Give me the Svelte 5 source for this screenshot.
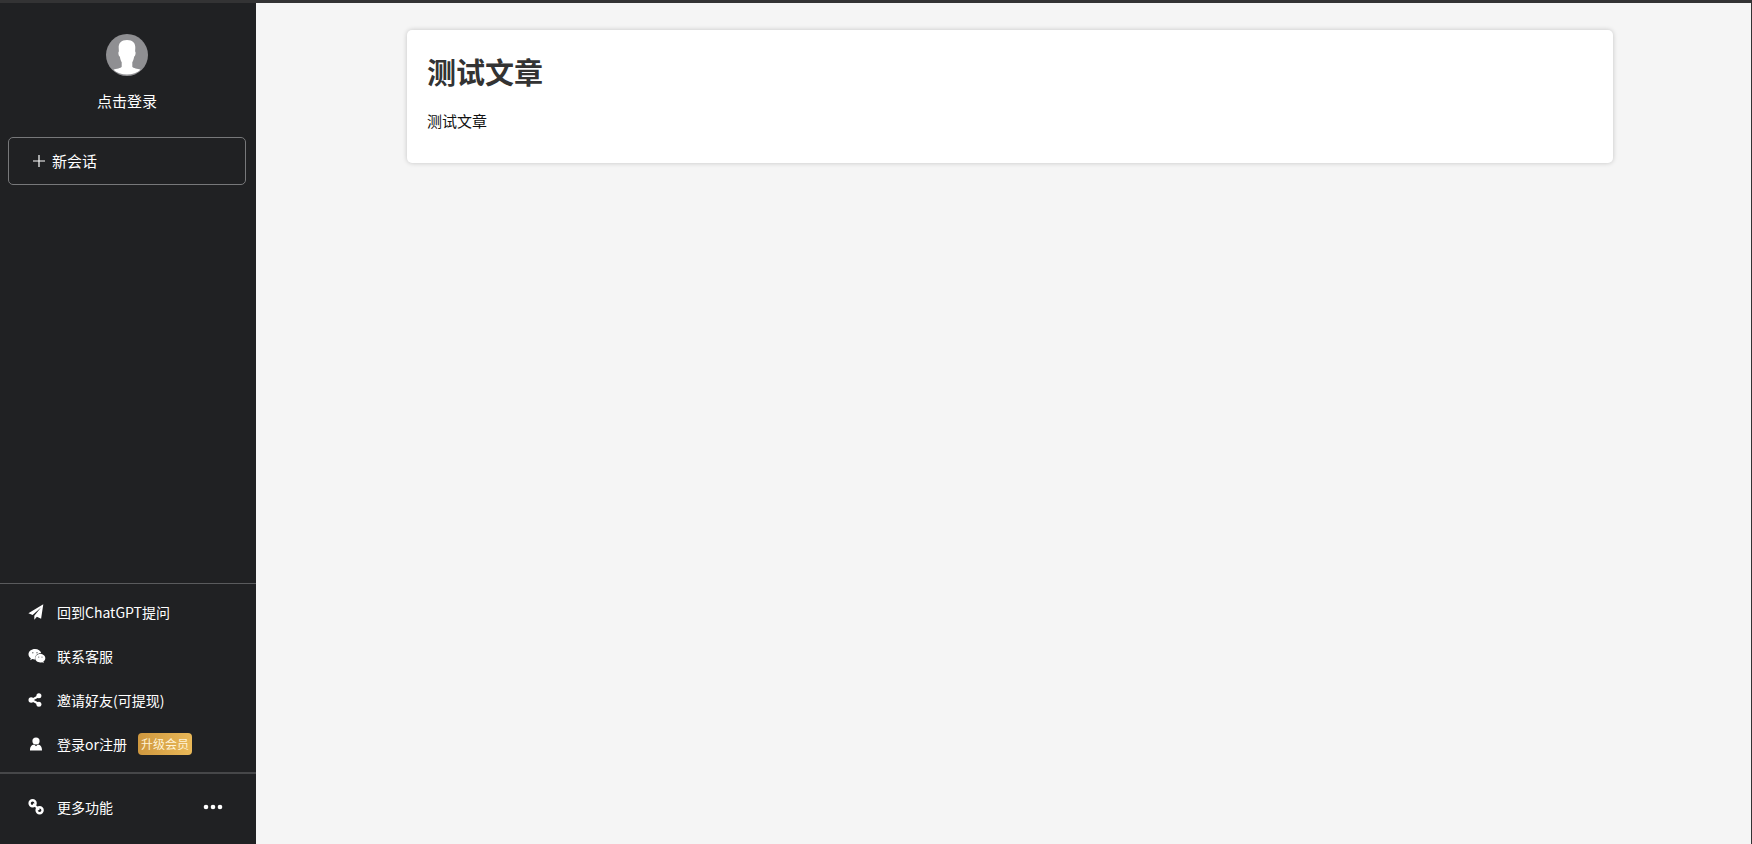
<script>
  const links = [
    { icon: 'plane', label: '回到ChatGPT提问' },
    { icon: 'wechat', label: '联系客服' },
    { icon: 'share', label: '邀请好友(可提现)' },
    { icon: 'user', label: '登录or注册', badge: '升级会员' }
  ];
</script>

{#snippet glyph(name)}
  <svg class="icon" viewBox="0 0 18 18" aria-hidden="true">
    {#if name === 'plane'}
      <path d="M15.300 1.300.4 10.200l4.200 1.900L13 4.500l-6.700 8.300v4l2.600-3 4.200 1.900z" />
    {:else if name === 'wechat'}
      <path d="M7 2C3.300 2 .5 4.300.5 7.200c0 1.700.9 3.100 2.300 4.100l-.6 1.900 2.200-1.100c.8.2 1.700.4 2.600.3C6.600 9 9 6.300 13.300 6.300 12.600 3.700 10.200 2 7 2z" />
      <path d="M12.300 7.100c-2.900 0-5.100 1.900-5.100 4.200s2.200 4.200 5.100 4.200c.6 0 1.200-.1 1.800-.3l1.700.9-.5-1.500c1.300-.8 2-2 2-3.300 0-2.300-2.200-4.200-5-4.200z" />
      <g class="eyes">
        <circle cx="4.800" cy="5.800" r=".8" /><circle cx="9" cy="5.800" r=".8" />
        <circle cx="10.700" cy="10.100" r=".7" /><circle cx="14" cy="10.100" r=".7" />
      </g>
    {:else if name === 'share'}
      <path class="line" d="M11 5 3.500 9l7.500 4" />
      <circle cx="10.900" cy="4.700" r="2.500" /><circle cx="3.200" cy="9" r="2.700" /><circle cx="10.900" cy="13.300" r="2.500" />
    {:else if name === 'user'}
      <circle cx="8" cy="6" r="3.600" />
      <path d="M2 15.500c0-4 1.500-5.300 4.200-5.900L8 11.300l1.800-1.700c2.700.6 4.200 1.900 4.200 5.900z" />
    {:else}
      <circle class="ring" cx="4.600" cy="5.200" r="3" />
      <circle class="ring" cx="11.600" cy="12.200" r="3" />
      <path class="line" d="m5.200 5.800 6 6" />
    {/if}
  </svg>
{/snippet}

<div class="page">
  <aside>
    <button class="profile">
      <svg class="avatar" viewBox="0 0 42 42" aria-hidden="true">
        <defs><clipPath id="disc"><circle cx="21" cy="21" r="21" /></clipPath></defs>
        <g clip-path="url(#disc)">
          <rect width="42" height="42" fill="#8f8f92" />
          <path fill="#fff" d="M21 6c-5.800 0-8.500 3-8.300 8l.2 3.500c-1 .6-.4 4.500 1 5.200.4 2.500 1 4.200 1.800 5.600v4.500c-.7 1.600-5.300 1.800-8.200 3C10.500 39 15.500 40.500 21 40.500S31.500 39 34.500 35.800c-2.900-1.200-7.500-1.400-8.200-3v-4.500c.8-1.400 1.400-3.100 1.800-5.600 1.400-.7 2-4.600 1-5.200l.2-3.500c.2-5-2.500-8-8.300-8z" />
        </g>
      </svg>
      <span>点击登录</span>
    </button>

    <button class="new-chat">
      <svg viewBox="0 0 12 12" aria-hidden="true"><path d="M6 0v12M0 6h12" /></svg>
      新会话
    </button>

    <nav>
      {#each links as link}
        <a href="#{link.icon}">
          {@render glyph(link.icon)}
          <span>{link.label}</span>
          {#if link.badge}<span class="badge">{link.badge}</span>{/if}
        </a>
      {/each}
    </nav>

    <button class="more">
      {@render glyph('link')}
      <span>更多功能</span>
      <svg class="dots" viewBox="0 0 20 6" aria-hidden="true">
        <circle cx="3" cy="3" r="2.300" /><circle cx="10" cy="3" r="2.300" /><circle cx="17" cy="3" r="2.300" />
      </svg>
    </button>
  </aside>

  <main>
    <article>
      <h1>测试文章</h1>
      <p>测试文章</p>
    </article>
  </main>
</div>

<style>
  .page {
    display: flex;
    box-sizing: border-box;
    min-height: 100vh;
    border-top: 3px solid #333334;
    border-right: 1px solid #333334;
    background: #f5f5f5;
    font-family: "Noto Sans CJK SC", sans-serif;
    font-size: 15px;
    line-height: 22px;
  }

  aside {
    display: flex;
    flex-direction: column;
    flex: none;
    width: 256px;
    background: #202123;
    color: #fff;
  }

  button {
    border: 0;
    padding: 0;
    background: none;
    color: inherit;
    font: inherit;
    cursor: pointer;
  }

  .profile {
    display: flex;
    flex-direction: column;
    align-items: center;
    gap: 14px;
    margin: 31px 2px 25px 0;
  }

  .avatar {
    width: 42px;
    height: 42px;
  }

  .new-chat {
    display: flex;
    align-items: center;
    gap: 7px;
    height: 48px;
    margin: 0 10px 0 8px;
    padding: 0 24px;
    border: 1px solid #77787a;
    border-radius: 5px;
  }

  .new-chat svg {
    width: 12px;
    height: 12px;
    fill: none;
    stroke: #fff;
    stroke-width: 1.2;
  }

  nav {
    display: flex;
    flex-direction: column;
    margin-top: auto;
    padding: 6px 0;
    border-top: 1px solid #5a5b5d;
  }

  nav a,
  .more {
    display: flex;
    align-items: center;
    gap: 11px;
    height: 44px;
    padding: 0 33px 0 28px;
    color: inherit;
    font-size: 14px;
    text-decoration: none;
    white-space: nowrap;
  }

  .more {
    height: 72px;
    padding-bottom: 4px;
    border-top: 2px solid #464749;
  }

  .icon {
    flex: none;
    width: 18px;
    height: 18px;
    fill: #fff;
  }

  .eyes {
    fill: #77787a;
  }

  .line {
    fill: none;
    stroke: #fff;
    stroke-width: 2;
  }

  .ring {
    fill: none;
    stroke: #fff;
    stroke-width: 2.4;
  }

  .badge {
    padding: 0 3px;
    border-radius: 4px;
    background: linear-gradient(90deg, #cf983f, #e9b858);
    color: #fff3d6;
    font-size: 12px;
  }

  .dots {
    width: 20px;
    height: 6px;
    margin-left: auto;
    fill: #fff;
  }

  main {
    flex: 1;
    min-width: 0;
    padding: 27px 138px 27px 151px;
  }

  article {
    padding: 20px;
    border-radius: 5px;
    background: #fff;
    box-shadow: 0 0 5px rgba(0, 0, 0, 0.2);
  }

  h1 {
    margin: 0 0 18px;
    color: #333;
    font-size: 29px;
    font-weight: 700;
    line-height: 42px;
  }

  p {
    margin: 0 0 11px;
    color: #111;
  }
</style>
